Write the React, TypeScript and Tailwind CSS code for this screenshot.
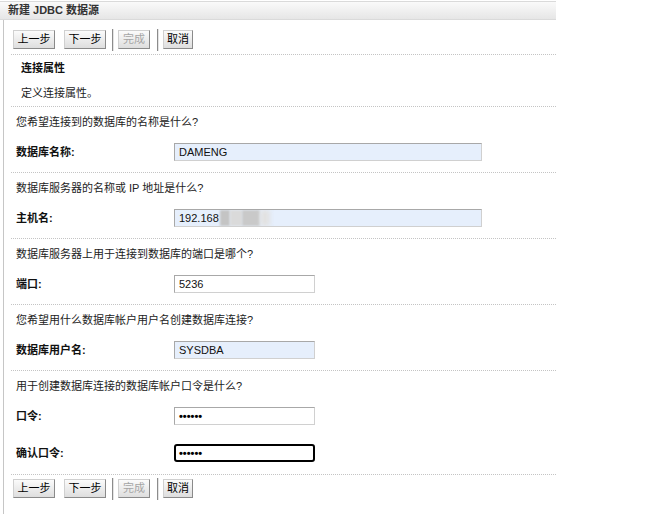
import React from "react";

const font = { fontFamily: '"Liberation Sans", "Noto Sans CJK SC", sans-serif' };

function WizardButtons() {
  const btn =
    "h-[19px] px-0 whitespace-nowrap text-[11px] leading-none flex items-center justify-center border border-t-[#d0d0d0] border-l-[#d0d0d0] border-r-[#8a8a8a] border-b-[#8a8a8a] bg-gradient-to-b from-[#fbfbfb] to-[#dedede]";
  return (
    <div className="flex items-center h-[19px] pl-[9px]">
      <button className={`${btn} w-[42px] text-black`}>上一步</button>
      <button className={`${btn} w-[42px] ml-[9px] text-black`}>下一步</button>
      <div className="ml-[6px] w-[2px] h-[22px] border-l border-[#8c8c8c] bg-[#e4e4e4]" />
      <button className={`${btn} w-[32px] ml-[4px] text-[#a5a5a5]`} disabled>
        完成
      </button>
      <div className="ml-[7px] w-[2px] h-[22px] border-l border-[#8c8c8c] bg-[#e4e4e4]" />
      <button className={`${btn} w-[30px] ml-[4px] text-black`}>取消</button>
    </div>
  );
}

function Divider() {
  return <div className="ml-[7px] border-t border-dotted border-[#c4c4c4]" />;
}

function Field({
  label,
  value,
  wide,
  filled,
  focused,
  password,
  blur,
}: {
  label: string;
  value: string;
  wide?: boolean;
  filled?: boolean;
  focused?: boolean;
  password?: boolean;
  blur?: boolean;
}) {
  const box = focused
    ? "border-2 border-black rounded-[3px] pl-[3px]"
    : "border border-t-[#a8a8a8] border-l-[#a8a8a8] border-r-[#d0d0d0] border-b-[#d0d0d0] pl-[4px]";
  return (
    <div className="flex items-center h-[30px] pl-[12px]">
      <div className="w-[158px] text-[11px] font-bold text-[#111]">{label}</div>
      <div
        className={`h-[18px] flex items-center overflow-hidden ${box} ${
          wide ? "w-[308px]" : "w-[141px]"
        } ${filled ? "bg-[#e6effc]" : "bg-white"}`}
      >
        {password ? (
          <span className="text-[11px] font-bold text-black leading-none">••••••</span>
        ) : (
          <span className="text-[11px] text-[#111] flex items-center">
            {value}
            {blur && (
              <span className="flex items-center ml-[1px]">
                <span className="inline-block w-[10px] h-[16px] bg-[#c4c4c4] blur-[1px]" />
                <span className="inline-block w-[12px] h-[16px] bg-[#dadada] blur-[1px]" />
                <span className="inline-block w-[18px] h-[16px] bg-[#c9c9c9] blur-[1px]" />
                <span className="inline-block w-[10px] h-[16px] bg-[#e2e2e2] blur-[2px]" />
              </span>
            )}
          </span>
        )}
      </div>
    </div>
  );
}

function Question({ text }: { text: string }) {
  return (
    <div className="h-[30px] flex items-center pl-[12px] text-[11px] text-[#222]">{text}</div>
  );
}

export default function App() {
  return (
    <div className="w-[671px] h-[514px] bg-white" style={font}>
      <div className="w-[556px] pt-[1px]">
        {/* Title bar */}
        <div className="h-[19px] flex items-center pl-[8px] border-t border-b border-[#dadada] bg-gradient-to-b from-[#fafafa] to-[#e6e6e6]">
          <span className="text-[11px] font-bold text-[#333]">新建 JDBC 数据源</span>
        </div>

        <div className="ml-[3px] border-l border-[#c6c6c6] h-[494px]">
          <div className="pt-[10px] pb-[5px]">
            <WizardButtons />
          </div>
          <Divider />

          <div className="h-[51px] pl-[17px] text-[11px]">
            <div className="h-[27px] flex items-center font-bold text-[#111]">连接属性</div>
            <div className="h-[22px] flex items-center text-[#222]">定义连接属性。</div>
          </div>
          <Divider />

          <Question text="您希望连接到的数据库的名称是什么?" />
          <Field label="数据库名称:" value="DAMENG" wide filled />
          <div className="h-[5px]" />
          <Divider />

          <Question text="数据库服务器的名称或 IP 地址是什么?" />
          <Field label="主机名:" value="192.168" wide filled blur />
          <div className="h-[5px]" />
          <Divider />

          <Question text="数据库服务器上用于连接到数据库的端口是哪个?" />
          <Field label="端口:" value="5236" />
          <div className="h-[5px]" />
          <Divider />

          <Question text="您希望用什么数据库帐户用户名创建数据库连接?" />
          <Field label="数据库用户名:" value="SYSDBA" filled />
          <div className="h-[5px]" />
          <Divider />

          <Question text="用于创建数据库连接的数据库帐户口令是什么?" />
          <Field label="口令:" value="" password />
          <div className="h-[7px]" />
          <Field label="确认口令:" value="" password focused />
          <div className="h-[6px]" />
          <Divider />

          <div className="pt-[4px]">
            <WizardButtons />
          </div>
        </div>
      </div>
    </div>
  );
}
